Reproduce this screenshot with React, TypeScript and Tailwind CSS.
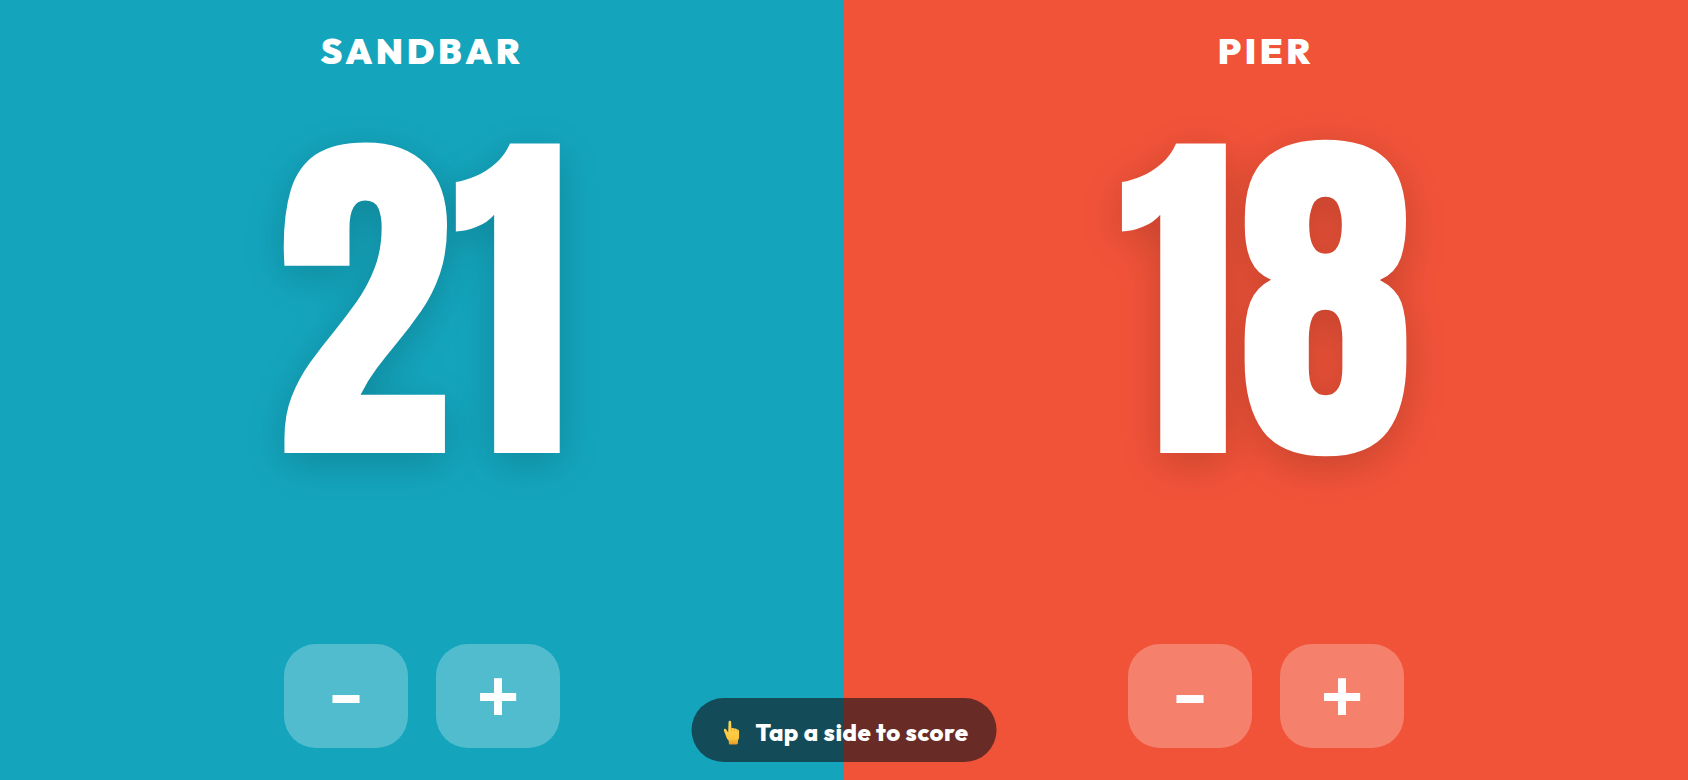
import React, { useState } from "react";

function TapIcon() {
  return (
    <svg width="16" height="25" viewBox="0 0 16 25" aria-hidden="true">
      <defs>
        <linearGradient id="hand" x1="0" y1="0" x2="0" y2="1">
          <stop offset="0" stopColor="#ffd95c" />
          <stop offset="0.75" stopColor="#fcc63c" />
          <stop offset="1" stopColor="#e59a22" />
        </linearGradient>
      </defs>
      <path
        d="M5 2.2C5 .2 7.6.2 7.6 2.2L7.9 8.6C9 7.8 10.3 8 10.9 8.8C12 8.3 13 8.7 13.5 9.6C14.8 9.4 15.6 10.2 15.6 11.5V16.5C15.6 18.6 14.8 19.6 14.4 20.5V22.8C14.4 24 13.8 24.4 12.8 24.4H6.8C5.8 24.4 5.3 23.9 5.3 22.9V21C3.5 19.2 2.6 17 1.9 14.6C1.5 13.2.6 11.6.3 10.2C0 8.7 1.8 8.2 2.7 9.5L4.6 12.4Z"
        fill="url(#hand)"
      />
      <path
        d="M7.9 8.6V11M10.9 9V11.3M13.5 9.8V11.4"
        fill="none"
        stroke="#e5a02a"
        strokeWidth="0.6"
        strokeLinecap="round"
      />
    </svg>
  );
}

interface SideProps {
  name: string;
  score: number;
  color: string;
  onChange: (delta: number) => void;
}

function Side({ name, score, color, onChange }: SideProps) {
  const controlClass =
    "flex h-[104px] w-[124px] items-center justify-center rounded-[32px] bg-white/26 leading-none text-white";

  return (
    <section
      className={`flex flex-1 flex-col items-center pt-8 pb-8 ${color}`}
      onClick={() => onChange(1)}
    >
      <h2 className="font-[Outfit,Lato,sans-serif] text-[36px] leading-[38px] font-black tracking-widest text-white">
        {name}
      </h2>
      <output
        aria-label={`${name} score`}
        className="mt-[51px] font-[Anton,'Liberation_Sans_Narrow',sans-serif] text-[360px] leading-none font-normal text-white [text-shadow:0_10px_40px_rgba(0,0,0,0.18)]"
      >
        {score}
      </output>
      <div className="mt-auto flex gap-7" onClick={(e) => e.stopPropagation()}>
        <button
          aria-label={`Remove point from ${name}`}
          className={`${controlClass} font-[Inter,sans-serif] text-[54px] font-black`}
          onClick={() => onChange(-1)}
        >
          –
        </button>
        <button
          aria-label={`Add point to ${name}`}
          className={`${controlClass} font-['Liberation_Sans',sans-serif] text-[72px] font-bold`}
          onClick={() => onChange(1)}
        >
          +
        </button>
      </div>
    </section>
  );
}

export default function App() {
  const [scores, setScores] = useState([21, 18]);

  const change = (index: number, delta: number) => {
    setScores((prev) => prev.map((s, i) => (i === index ? Math.max(0, s + delta) : s)));
  };

  return (
    <main className="relative flex min-h-screen select-none">
      <Side name="SANDBAR" score={scores[0]} color="bg-[#14a5bd]" onChange={(d) => change(0, d)} />
      <Side name="PIER" score={scores[1]} color="bg-[#f15339]" onChange={(d) => change(1, d)} />
      <div className="pointer-events-none absolute bottom-[18px] left-1/2 flex h-16 -translate-x-1/2 items-center gap-4 rounded-full bg-[#14141c]/62 pt-1 pr-7 pl-8 font-[Outfit,Lato,sans-serif] text-2xl font-extrabold tracking-[0.02em] whitespace-nowrap text-white">
        <TapIcon />
        <span>Tap a side to score</span>
      </div>
    </main>
  );
}
